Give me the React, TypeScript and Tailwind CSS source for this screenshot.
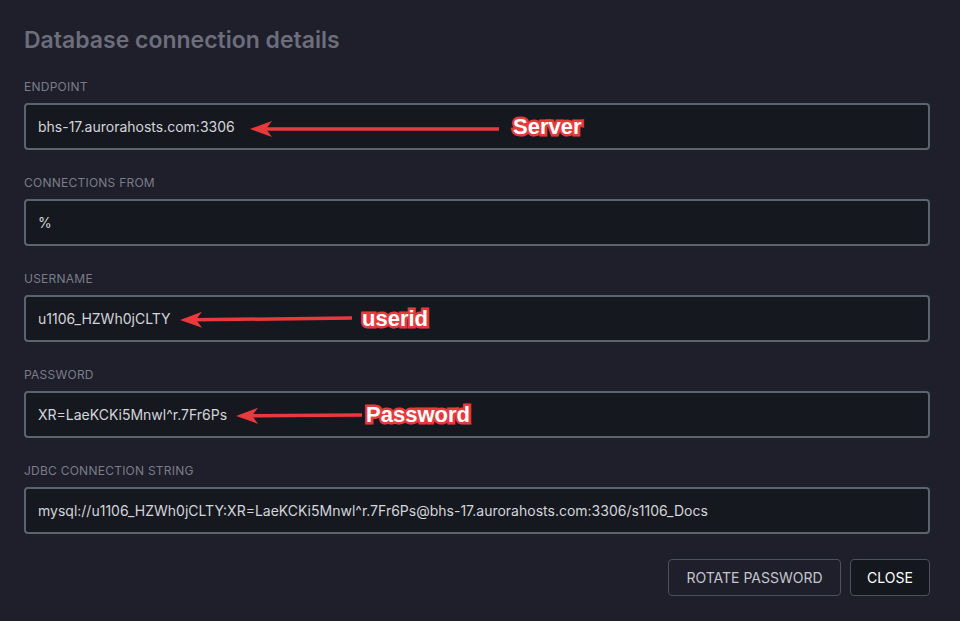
const fields = [
  { label: "ENDPOINT", value: "bhs-17.aurorahosts.com:3306" },
  { label: "CONNECTIONS FROM", value: "%" },
  { label: "USERNAME", value: "u1106_HZWh0jCLTY" },
  { label: "PASSWORD", value: "XR=LaeKCKi5Mnwl^r.7Fr6Ps" },
  {
    label: "JDBC CONNECTION STRING",
    value: "mysql://u1106_HZWh0jCLTY:XR=LaeKCKi5Mnwl^r.7Fr6Ps@bhs-17.aurorahosts.com:3306/s1106_Docs",
  },
];

// red annotation arrows drawn on top of the screenshot
const notes: Record<number, { x1: number; y1: number; x2: number; y2: number; text: string; tx: number }> = {
  0: { x1: 224, y1: 24, x2: 473, y2: 24, text: "Server", tx: 487 },
  2: { x1: 154, y1: 23, x2: 326, y2: 21, text: "userid", tx: 336 },
  3: { x1: 210, y1: 23, x2: 336, y2: 22, text: "Password", tx: 340 },
};

function Arrow({ x1, y1, x2, y2 }: { x1: number; y1: number; x2: number; y2: number }) {
  const ang = Math.atan2(y2 - y1, x2 - x1);
  const len = 22;
  const w = 8;
  const bx = x1 + Math.cos(ang) * len;
  const by = y1 + Math.sin(ang) * len;
  const nx = -Math.sin(ang) * w;
  const ny = Math.cos(ang) * w;
  const inner = x1 + Math.cos(ang) * (len - 6);
  const innerY = y1 + Math.sin(ang) * (len - 6);
  return (
    <svg className="pointer-events-none absolute left-0 top-0" width="900" height="47">
      <line x1={inner} y1={innerY} x2={x2} y2={y2} stroke="#e8393c" strokeWidth="3.5" />
      <polygon
        points={`${x1},${y1} ${bx + nx},${by + ny} ${inner},${innerY} ${bx - nx},${by - ny}`}
        fill="#e8393c"
      />
    </svg>
  );
}

export default function App() {
  return (
    <div className="h-[621px] w-[960px] overflow-hidden bg-[#1f1e2b] pl-6 pr-[30px] pt-6 font-['Inter',sans-serif]">
      <h1 className="h-8 text-[23px] font-semibold leading-8 text-[#6c6e7b]">Database connection details</h1>
      <div className="mt-[23px] flex flex-col gap-[25px]">
        {fields.map((f, i) => {
          const n = notes[i];
          return (
            <div key={f.label} className="flex flex-col gap-2">
              <label className="text-xs leading-4 tracking-[0.02em] text-[#7a7d88]">{f.label}</label>
              <div className="relative flex h-[47px] items-center rounded border-2 border-[#5a6470] bg-[#161820] px-3 text-sm text-[#d3d5da]">
                {f.value}
                {n && (
                  <>
                    <Arrow x1={n.x1} y1={n.y1} x2={n.x2} y2={n.y2} />
                    <span
                      className="absolute top-1/2 -translate-y-1/2 font-['Liberation_Sans',Arial,sans-serif] text-[22px] font-bold text-white [paint-order:stroke_fill] [-webkit-text-stroke:5px_#e8393c]"
                      style={{ left: n.tx }}
                    >
                      {n.text}
                    </span>
                  </>
                )}
              </div>
            </div>
          );
        })}
      </div>
      <div className="mt-[25px] flex justify-end gap-[9px]">
        <button className="h-[37px] w-[173px] rounded border border-[#4b525d] text-sm text-[#c4c6cc]">ROTATE PASSWORD</button>
        <button className="h-[37px] w-20 rounded border border-[#4b525d] bg-[#15171e] text-sm text-white">CLOSE</button>
      </div>
    </div>
  );
}
